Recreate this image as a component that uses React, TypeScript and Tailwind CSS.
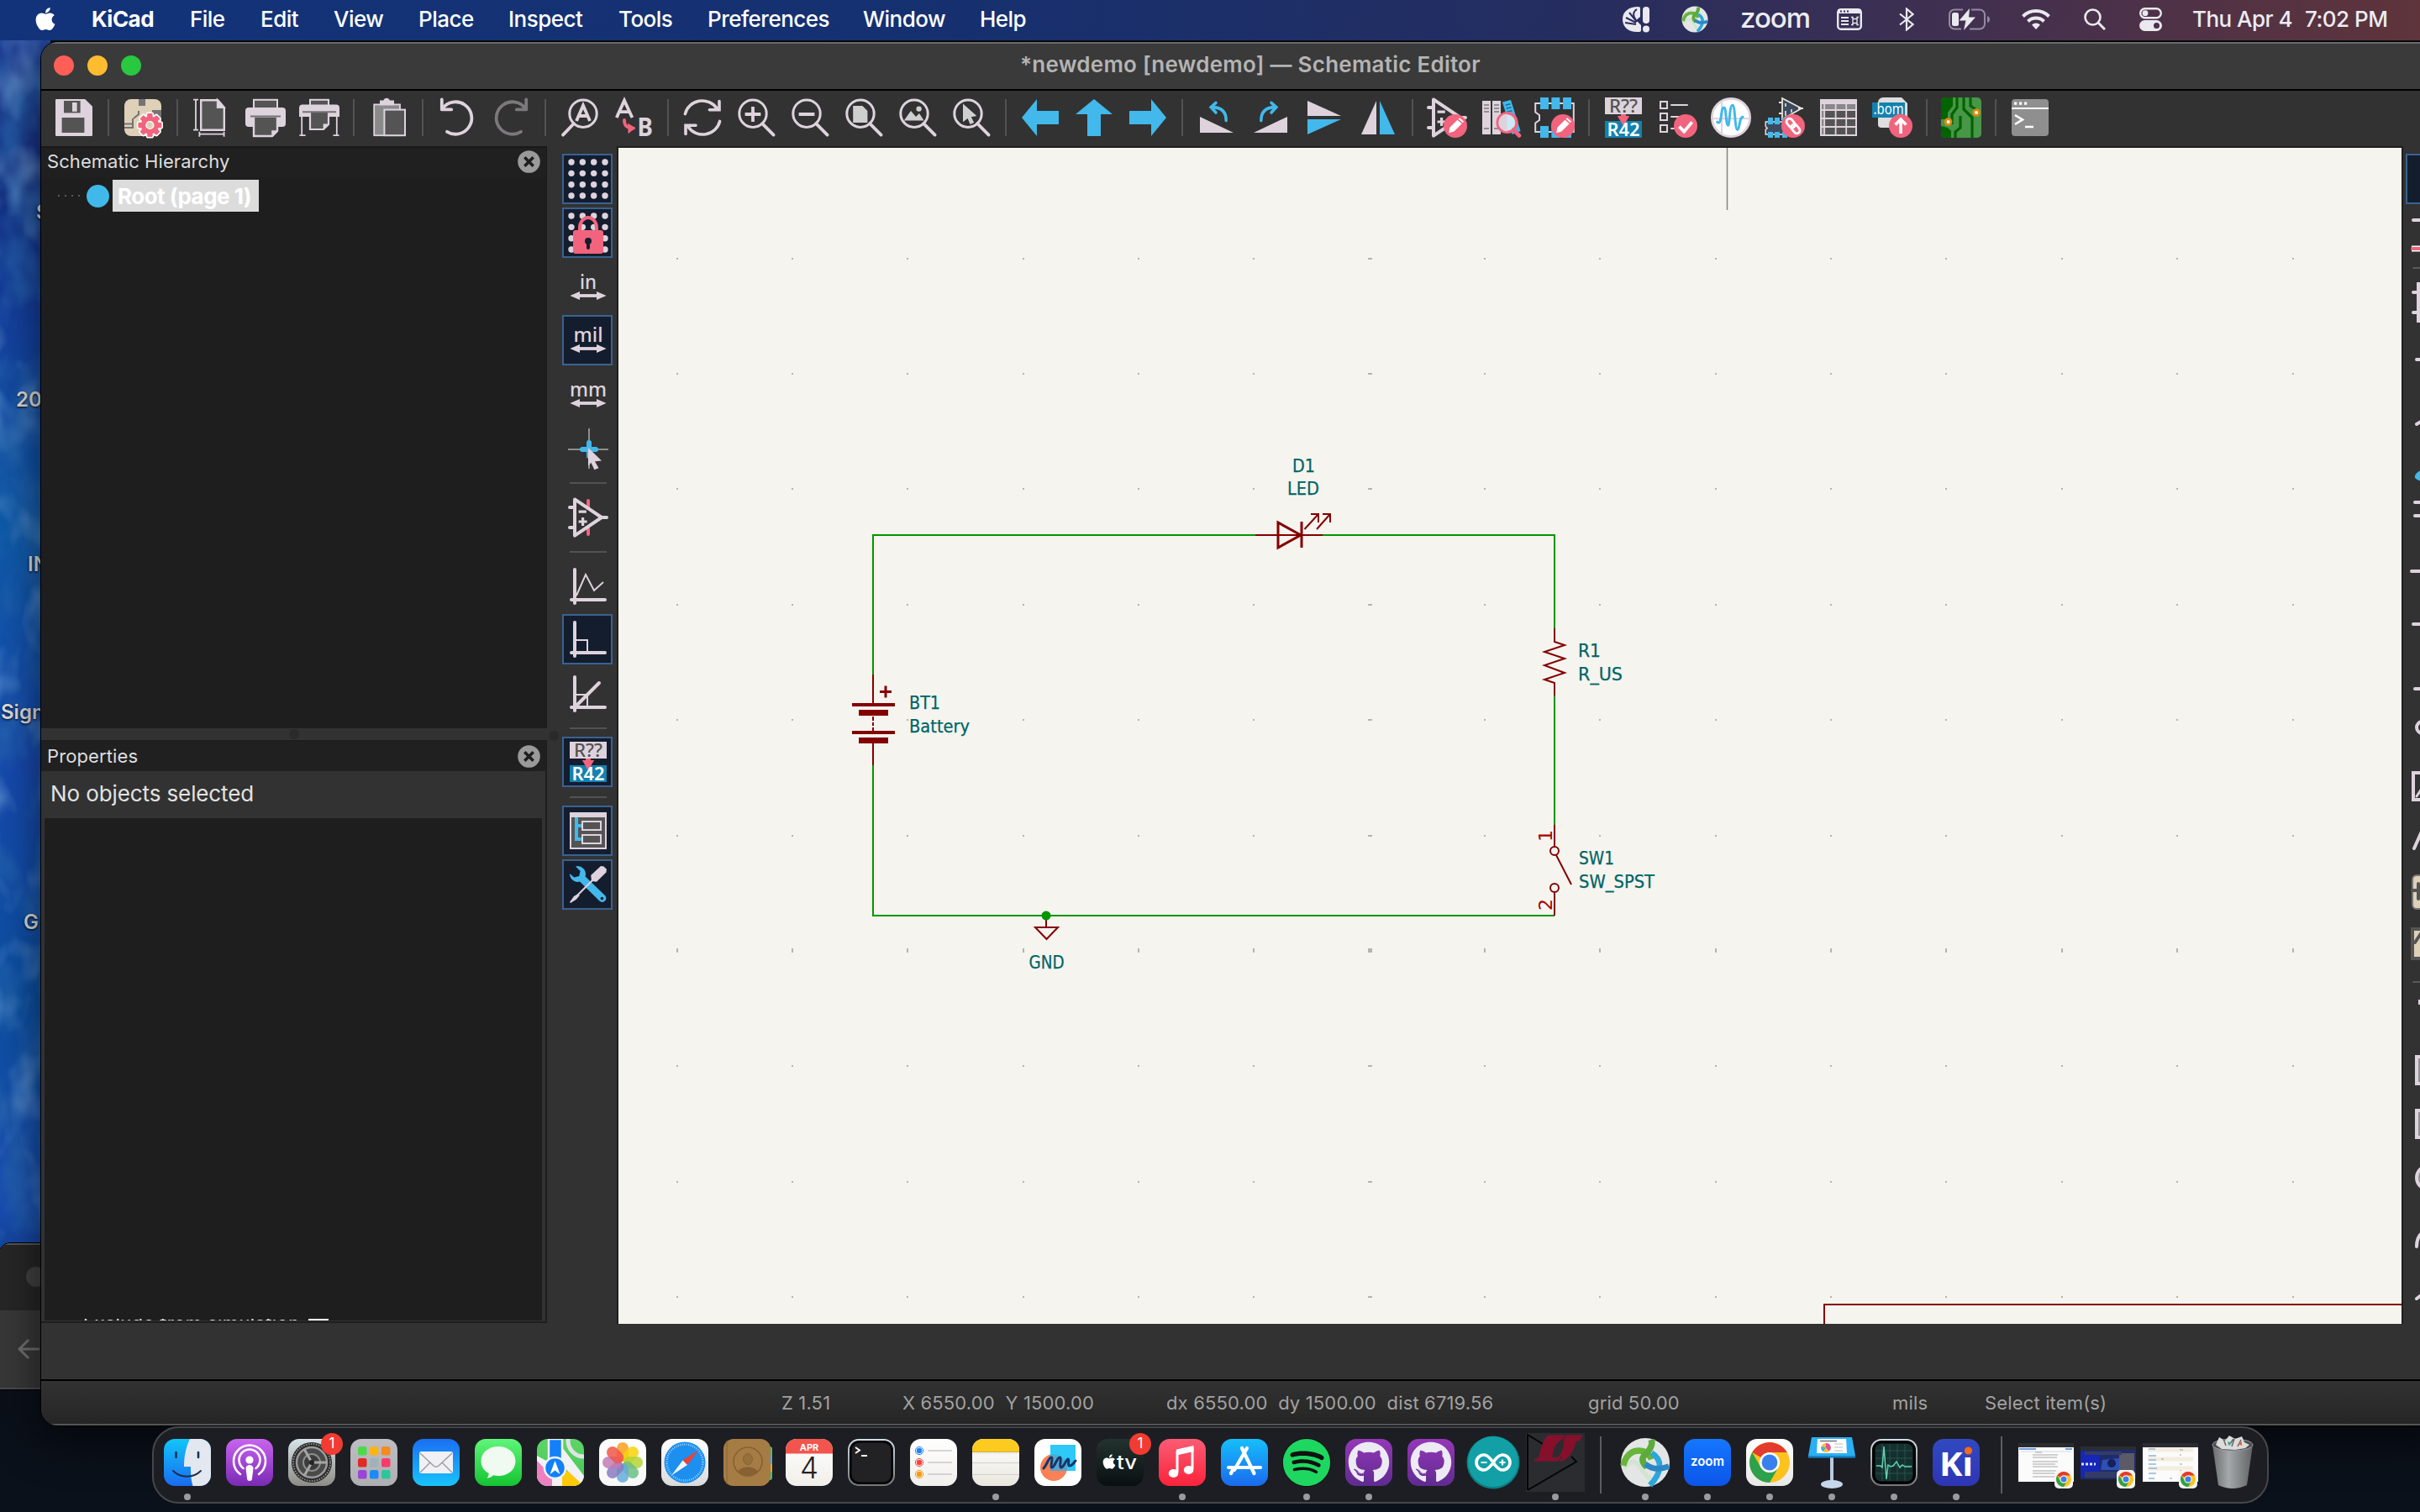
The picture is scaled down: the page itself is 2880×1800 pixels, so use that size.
import React from "react";
import { FaApple, FaGithub, FaSpotify } from "react-icons/fa";

const L = "#DED3DD";
const B = "#42B8EB";
const P = "#F2647E";
const D = "#545454";

type Kids = { children?: React.ReactNode };

function Ico({ children }: Kids) {
  return (
    <svg viewBox="0 0 24 24" className="block h-12 w-12 shrink-0 overflow-visible" fill="none">
      {children}
    </svg>
  );
}

function Pencil({ x = 17, y = 17 }: { x?: number; y?: number }) {
  return (
    <g transform={`translate(${x} ${y})`}>
      <circle r="7" fill={P} />
      <path d="M-3.9 4.1l.6-3.2L1.2-3.6 3.8-1.4-.8 3.3z" fill="#fff" />
      <path d="M1.8-4.2l.7-.7 2.5 2.2-.7.8z" fill="#fff" />
    </g>
  );
}

function Lens({ children }: Kids) {
  return (
    <Ico>
      <circle cx="10" cy="9.6" r="8.1" stroke={L} strokeWidth="1.5" />
      <path d="M15.6 15.6L22.3 22.3" stroke={L} strokeWidth="1.9" strokeLinecap="round" />
      {children}
    </Ico>
  );
}

function OpAmp() {
  return (
    <>
      <path d="M4 1.2L20 12 4 22.8z" stroke={L} strokeWidth="2" strokeLinejoin="round" />
      <path d="M1 6h3M1 18h3M20 12h3" stroke={L} strokeWidth="2" strokeLinecap="round" />
      <path d="M6.3 8.6h4.6M6.3 14.5h5M8.8 12v5" stroke={L} strokeWidth="1.6" />
    </>
  );
}

function Annotate() {
  return (
    <Ico>
      <rect x="1" y="0" width="22" height="10" fill={L} />
      <rect x="1" y="14" width="22" height="10" fill="#1282B0" />
      <text x="12" y="9" textAnchor="middle" fontSize="11" textLength="17" lengthAdjust="spacingAndGlyphs" fill={D} fontFamily="Noto Sans" fontWeight="500">R??</text>
      <path d="M10.5 10h3v1H15.6L12 17 8.4 11h2.1z" fill={P} />
      <text x="12" y="23" textAnchor="middle" fontSize="11" textLength="19.6" lengthAdjust="spacingAndGlyphs" fill="#fff" fontFamily="Noto Sans" fontWeight="600">R42</text>
    </Ico>
  );
}

const topBar: (React.ReactNode | null)[] = [
  <Ico>
    <path d="M1.6 1H18.6L23 5.4V22.4a.6.6 0 0 1-.6.6H1.6a.6.6 0 0 1-.6-.6V1.6A.6.6 0 0 1 1.6 1z" fill={L} />
    <rect x="6" y="2" width="9.8" height="7.2" fill={D} />
    <rect x="11" y="3" width="2.8" height="5.4" fill={L} />
    <rect x="4.8" y="12" width="13.4" height="9" fill={D} />
  </Ico>,
  null,
  <Ico>
    <rect x="1" y="1" width="22" height="22" rx="4" fill="#DED1B8" />
    <path d="M9.500 1h4v4h-4zM17.500 7.500h5.500v5h-5.500z" fill="#747474" />
    <path d="M1 15.800h5M6 12.500v5.500H1M6.500 12.500l3-2.500V8" stroke="#747474" strokeWidth="1" />
    <g transform="translate(16.2 16.5)">
      {[0, 45, 90, 135].map((a) => (
        <rect key={a} x="-2" y="-7.4" width="4" height="14.8" rx="1" fill={P} stroke="#fff" strokeWidth="0.8" transform={`rotate(${a})`} />
      ))}
      <circle r="5.3" fill={P} />
      <circle r="2.2" fill="#DED1B8" stroke="#fff" strokeWidth="0.7" />
    </g>
  </Ico>,
  null,
  <Ico>
    <path d="M1 1.3h3M2.5 1v18.5M1 19.3h3M4.7 21.8h14.6M4.7 20.4v3M19.3 20.4v3" stroke={L} strokeWidth="0.9" />
    <path d="M5.6 1.6H15.6L19.4 6V19.4H5.6z" fill={D} stroke={L} strokeWidth="1.2" />
    <path d="M15.4 1.4V6h4z" fill={L} stroke={L} />
  </Ico>,
  <Ico>
    <rect x="5" y="1.4" width="14" height="6" fill={D} stroke={L} strokeWidth="1" />
    <path d="M2 6h20a2 2 0 0 1 2 2v7.5a2 2 0 0 1-2 2H2a2 2 0 0 1-2-2V8a2 2 0 0 1 2-2z" fill={L} />
    <path d="M5 11.3h14v8.7l-3 3H5z" fill={D} stroke={L} strokeWidth="1.2" />
    <path d="M19 19.6h-3.4V23z" fill={L} />
    <path d="M3 11.3h18" stroke="#747474" strokeWidth="1" />
  </Ico>,
  <Ico>
    <rect x="6.5" y="1.4" width="11" height="4" fill={D} stroke={L} strokeWidth="1" />
    <path d="M2 4.2h20a2 2 0 0 1 2 2v5.3H0V6.200a2 2 0 0 1 2-2z" fill={L} />
    <path d="M1.6 11v12M22.400 11v12M.2 22.600h3.600M20.200 22.600h3.600" stroke={L} strokeWidth="0.9" />
    <path d="M6.500 8.500h11v7.500l-3 3h-8z" fill={D} stroke={L} strokeWidth="1.1" />
    <path d="M17.500 15.800h-3.200V19z" fill={L} />
    <path d="M2 8.600h20" stroke="#747474" strokeWidth="1" />
  </Ico>,
  null,
  <Ico>
    <rect x="3.600" y="4.200" width="15.400" height="18.400" fill="#8a8a8a" stroke={L} strokeWidth="0.9" />
    <path d="M7 1.800h2.200a2 2 0 0 1 3.800 0H15.500V4.600H7z" fill={L} />
    <rect x="9.700" y="7.300" width="12.300" height="15.300" fill={D} stroke={L} strokeWidth="1" />
  </Ico>,
  null,
  <Ico>
    <path d="M2.900 1.200V7.200H8.600M3.300 6.600A9.600 9.600 0 1 1 6 20.400" stroke={L} strokeWidth="1.900" strokeLinecap="round" strokeLinejoin="round" />
  </Ico>,
  <Ico>
    <path d="M21.100 1.200V7.200H15.400M20.700 6.600A9.600 9.600 0 1 0 18 20.400" stroke="#7c787c" strokeWidth="1.900" strokeLinecap="round" strokeLinejoin="round" />
  </Ico>,
  null,
  <Ico>
    <circle cx="14" cy="9.600" r="8.100" stroke={L} strokeWidth="1.500" />
    <path d="M8.400 15.600L2 22.300" stroke={L} strokeWidth="1.900" strokeLinecap="round" />
    <path d="M10 14L14 4.800 18 14M11.500 11h5" stroke={L} strokeWidth="1.900" />
  </Ico>,
  <Ico>
    <path d="M1.900 12L6.500 1.800 11.200 12M3.600 8.600h6" stroke={L} strokeWidth="1.900" />
    <text x="14.200" y="22.800" fontSize="15" fill={L} fontFamily="Noto Sans" fontWeight="700" textLength="9.200" lengthAdjust="spacingAndGlyphs">B</text>
    <path d="M6.500 13.500c0 3.500 1.500 4.600 5.500 4.800" stroke={P} strokeWidth="1.900" strokeLinecap="round" />
    <path d="M8.600 15.200L13 18.200 8.800 21.600z" fill={P} />
  </Ico>,
  null,
  <Ico>
    <path d="M1.700 9.800A10.400 10 0 0 1 20.600 6.600M22.300 14.200A10.400 10 0 0 1 3.400 17.400" stroke={L} strokeWidth="1.800" strokeLinecap="round" />
    <path d="M22 2.300V7.400H16.200M2 21.700V16.600H8" stroke={L} strokeWidth="1.800" strokeLinecap="round" />
  </Ico>,
  <Lens><path d="M5.300 10h9.400M10 5.500v9" stroke={L} strokeWidth="1.900" /></Lens>,
  <Lens><path d="M5.300 10h9.400" stroke={L} strokeWidth="1.900" /></Lens>,
  <Lens><path d="M5.600 5h5.600l3 3v7.000H5.600z" fill="#CFCFCF" /></Lens>,
  <Lens><path d="M3.900 13.800L8 8l3 3.500 2-2 2.800 4.300zM12.800 5.200a1.600 1.600 0 1 1 0 3.200 1.600 1.600 0 0 1 0-3.200z" fill="#CFCFCF" /></Lens>,
  <Lens><path d="M7 3.800L15.200 11l-3.300.6 1.700 3.400-2.300 1-1.500-3.500L7 14.600z" fill="#CFCFCF" /></Lens>,
  null,
  <Ico><path d="M1 12L10 1V8H23v8H10v7z" fill={B} /></Ico>,
  <Ico><path d="M12 1L23 10H16V23H8V10H1z" fill={B} /></Ico>,
  <Ico><path d="M23 12L14 1V8H1v8H14v7z" fill={B} /></Ico>,
  null,
  <Ico>
    <path d="M2 11.500V21H22z" fill={L} />
    <path d="M17.600 13.800c0-5-2.500-8.000-8.600-8.000M11.500 3.200L8.600 5.800 11.500 9" stroke={B} strokeWidth="1.800" strokeLinecap="round" />
  </Ico>,
  <Ico>
    <path d="M22 11.500V21H2z" fill={L} />
    <path d="M6.400 13.800c0-5 2.500-8.000 8.600-8.000M12.500 3.200L15.400 5.800 12.500 9" stroke={B} strokeWidth="1.800" strokeLinecap="round" />
  </Ico>,
  <Ico><path d="M2 2V11H22z" fill={L} /><path d="M2 13V22L22 13z" fill={B} /></Ico>,
  <Ico><path d="M11 2V22H2z" fill={L} /><path d="M13 2V22H22z" fill={B} /></Ico>,
  null,
  <Ico><OpAmp /><Pencil /></Ico>,
  <Ico>
    <rect x="1" y="2" width="5" height="20" fill={L} /><rect x="7" y="2" width="5" height="20" fill={L} />
    <path d="M2 4.500h3M2 6.500h3M2 8.500h3M2 18.500h3M8 4.500h3M8 6.500h3M8 8.500h3M8 18.500h3" stroke="#777" strokeWidth=".8" />
    <path d="M13 2.700l5-1.200L23.800 20l-5 2z" fill={B} />
    <path d="M14.800 4.600l3-.7M15.300 6.600l3-.7M15.800 8.600l3-.7" stroke="#1a6f96" strokeWidth=".8" />
    <circle cx="15.800" cy="15" r="5.700" fill="#CDE9F5" stroke={P} strokeWidth="1.700" />
    <path d="M15.800 9.800a5.200 5.200 0 0 0 0 10.400z" fill="#DED3DD" />
    <path d="M19.600 19.200L23 22.700" stroke={P} strokeWidth="2.400" strokeLinecap="round" />
  </Ico>,
  <Ico>
    <path d="M.6 3.500H23.400V20.500H.6V15.200L3 13.500V10.500L.6 8.800z" stroke={L} strokeWidth="1" />
    <path d="M3.500 0h5v7h-5zM10.200 0h5v7h-5zM17 0h5v7h-5zM3.500 17h5v7h-5zM10.200 17h5v7h-5zM17 17h5v7h-5z" fill={B} />
    <Pencil />
  </Ico>,
  null,
  <Annotate />,
  <Ico>
    {[2.500, 9.500, 16.500].map((y) => (
      <g key={y}>
        <rect x="2" y={y} width="4" height="4" stroke={L} strokeWidth="1" />
        <path d={`M8.500 ${y + 2}h9.500`} stroke={L} strokeWidth="1" strokeLinecap="round" />
      </g>
    ))}
    <circle cx="17" cy="17" r="7" fill={P} />
    <path d="M13.200 17.300l2.900 3 4.700-5.600" stroke="#fff" strokeWidth="1.900" />
  </Ico>,
  <Ico>
    <circle cx="12" cy="12" r="11.300" fill="#fff" stroke={L} strokeWidth="1.400" />
    <path d="M6.500 2.500v19M1 12.600h22" stroke={L} strokeWidth="1" />
    <path d="M3.800 14.600c2 2 2.300-3 2.700-6 .6-3.500 2-3.500 2.300 0 .4 4 .6 8 1.500 8 .9 0 .8-12 2.600-12 1.700 0 1.300 14.600 3 14.600 1.300 0 1-7.600 3.200-7.600" stroke={B} strokeWidth="1.500" strokeLinecap="round" />
  </Ico>,
  <Ico>
    <path d="M10.500.5L22 6.500 10.500 13z" fill="#3c4a60" stroke="#E8E4DC" strokeWidth=".9" />
    <path d="M8.500 3h2M8.500 9.500h2M20 6.500h3" stroke="#E8E4DC" strokeWidth=".9" />
    <path d="M12.500 3.500v2M12.500 8v3M16 7v2" stroke="#E8E4DC" strokeWidth=".8" />
    <path d="M.6 14.500H15V22H.6v-2.800l1-1-1-1z" fill="#3c4a60" stroke="#E8E4DC" strokeWidth=".7" />
    <path d="M2 12h3v4H2zM6 12h3v4H6zM10.500 12h3v4h-3zM2 20.500h3V24H2zM6 20.500h3V24H6zM10.500 20.500h3V24h-3z" fill={B} />
    <circle cx="17" cy="17" r="7" fill={P} />
    <g stroke="#fff" strokeWidth="1.400" transform="rotate(50 17 17)"><rect x="11.800" y="15.200" width="6" height="3.600" rx="1.800" /><rect x="16.200" y="15.200" width="6" height="3.600" rx="1.800" /></g>
  </Ico>,
  <Ico>
    <rect x="1.500" y="1.500" width="21" height="21" fill="#8a868a" stroke={L} strokeWidth="1" />
    <path d="M4 8h18v14H4z" fill={D} />
    <rect x="1" y="1" width="22" height="3" fill={L} />
    <path d="M3.600 4v19M10.300 4v19M16.600 4v19M1 7.500h22M1 12.500h22M1 17.500h22" stroke={L} strokeWidth=".9" />
  </Ico>,
  <Ico>
    <path d="M6.500 0H17.500L21 3.500V16a2 2 0 0 1-2 2H5.500a2 2 0 0 1-2-2V3a3 3 0 0 1 3-3z" fill="#DEDEDE" />
    <rect x="0" y="3" width="19.500" height="9" fill="#1282B0" />
    <text x="9.800" y="10.200" textAnchor="middle" fontSize="9" textLength="18" lengthAdjust="spacingAndGlyphs" fill="#fff" fontFamily="Noto Sans">.bom</text>
    <circle cx="17" cy="17" r="7" fill={P} />
    <path d="M17 21.500V13.500M13.800 16.200L17 13l3.200 3.200" stroke="#fff" strokeWidth="1.800" />
  </Ico>,
  null,
  <Ico>
    <rect width="24" height="24" rx="2.500" fill="#489648" />
    <path d="M0 2.500A2.500 2.500 0 0 1 2.500 0H7v5L4 9v4H0zM0 17l4 1 2 2v4H2.500A2.500 2.500 0 0 1 0 21.500z" fill="#006400" />
    <path d="M9.500 0v6L6.500 10v6M13.500 0v7l5 5V24M17.500 0v5l3 2M11.500 11v7L8.500 20.500V24" stroke="#006400" strokeWidth="1.600" />
    <circle cx="4.300" cy="14.500" r="1.700" fill="#fff" stroke="#E3890B" strokeWidth="1.400" />
    <circle cx="21" cy="9" r="1.700" fill="#fff" stroke="#E3890B" strokeWidth="1.400" />
  </Ico>,
  null,
  <Ico>
    <rect x="1" y="1" width="22" height="22" rx="2" fill="#8F8F8F" />
    <path d="M1 6.500h22" stroke="#fff" strokeWidth="1" />
    <path d="M2.500 3.600h1.600M5.500 3.600h1.600M8.500 3.600h1.600" stroke="#fff" strokeWidth="1.600" />
    <path d="M3 10.500L7.500 13.200 3 16M9 17.500h5" stroke="#fff" strokeWidth="1.300" />
  </Ico>,
];

function Dots() {
  return (
    <>
      {[0, 1, 2, 3].map((r) =>
        [0, 1, 2, 3].map((c) => (
          <circle key={`${r}${c}`} cx={2 + c * 6.67} cy={2 + r * 6.67} r="1.850" fill={L} />
        ))
      )}
    </>
  );
}

function Unit({ t, w }: { t: string; w: number }) {
  return (
    <Ico>
      <text x="12" y="13" textAnchor="middle" fontSize="12" fontWeight="500" fontFamily="Noto Sans" fill={L} textLength={w} lengthAdjust="spacingAndGlyphs">{t}</text>
      <path d="M5 17h14" stroke={L} strokeWidth="1.900" />
      <path d="M1.200 17L7 14.500v5zM22.800 17L17 14.500v5z" fill={L} />
    </Ico>
  );
}

function Axes({ children }: Kids) {
  return (
    <Ico>
      {children}
      <path d="M4 2v20M2 20h20" stroke={L} strokeWidth="2" strokeLinecap="round" />
    </Ico>
  );
}

const leftBar: ({ on?: boolean; el: React.ReactNode } | null)[] = [
  { on: true, el: <Ico><Dots /></Ico> },
  {
    on: true,
    el: (
      <Ico>
        <Dots />
        <path d="M7 12V9a5 6 0 0 1 10 0v3" stroke={P} strokeWidth="2" />
        <rect x="3" y="10.500" width="18" height="14" rx="1.500" fill={P} />
        <circle cx="12" cy="17" r="2" fill="#141d2e" /><path d="M12 17v4" stroke="#141d2e" strokeWidth="2" strokeLinecap="round" />
      </Ico>
    ),
  },
  { el: <Unit t="in" w={10} /> },
  { on: true, el: <Unit t="mil" w={17.500} /> },
  { el: <Unit t="mm" w={22} /> },
  {
    el: (
      <Ico>
        <path d="M12.500 0v24M0 12.500h24" stroke="#8f8f8f" strokeWidth="1" />
        <path d="M12.500 8.500v8M8.500 12.500h8" stroke={B} strokeWidth="3" strokeLinecap="round" />
        <path d="M12 11.500L20 19.200l-4 .4 2.200 4-2.500 1-2-4.200L12 22.500z" fill={L} />
      </Ico>
    ),
  },
  null,
  { el: <Ico><path d="M12 2v20" stroke={P} strokeWidth="2" strokeLinecap="round" /><path d="M4 1.200L20 12 4 22.800z" fill="#323232" /><OpAmp /></Ico> },
  null,
  { el: <Axes><path d="M5 17.500L10.500 5 15.500 14.500 21 9.500" stroke={L} strokeWidth="1" /></Axes> },
  { on: true, el: <Axes><path d="M4 12.500h7.500V20" stroke={L} strokeWidth="1" /></Axes> },
  { el: <Axes><path d="M4 12.500h7.500V20" stroke={L} strokeWidth="1" /><path d="M5 19L18.500 5.500" stroke={L} strokeWidth="2" strokeLinecap="round" /></Axes> },
  null,
  { on: true, el: <Annotate /> },
  null,
  {
    on: true,
    el: (
      <Ico>
        <rect x="1.500" y="1.500" width="21" height="21" fill={D} stroke={L} strokeWidth="1" />
        <rect x="1" y="1" width="22" height="3" fill={L} />
        <path d="M5 4v13.000h3M5 9h3" stroke={B} strokeWidth="2" />
        <rect x="8.500" y="6.500" width="11" height="5" stroke={L} strokeWidth="1" /><rect x="8.500" y="14.500" width="11" height="5" stroke={L} strokeWidth="1" />
      </Ico>
    ),
  },
  {
    on: true,
    el: (
      <Ico>
        <path d="M4.500 1.200a4.800 4.800 0 0 1 5.800 6.000L22 18.500a2.300 2.300 0 0 1-3.300 3.300L7.000 10.300A4.800 4.800 0 0 1 1 5.500L3.600 7.800 6.600 7 7.300 4z" fill={B} />
        <circle cx="20.200" cy="20.300" r=".9" fill="#141d2e" />
        <path d="M15 9L5.500 18.500" stroke={L} strokeWidth="1.100" />
        <path d="M6 17.500l.9 1-2 2.400L1.500 23 1 22.500 3.500 19z" fill={L} />
        <path d="M13.600 6.500L19.500 1l1.800.2L23 3.000l-.3 1.700L17 10.400 14 10z" fill={L} />
      </Ico>
    ),
  },
];

function RightBar() {
  return (
    <div className="flex w-[22px] shrink-0 flex-col overflow-hidden pl-[3px] pt-[9px]">
      <div className="h-[60px] w-[60px] shrink-0 border-2 border-[#3a6290] bg-[#141d2e]" />
      <svg className="block shrink-0" width="18" height="1320" viewBox="2863 243 18 1320" fill="none" stroke={L} strokeWidth="4" strokeLinecap="round">
        <path d="M2872 262h20" />
        <path d="M2870 296h20" stroke="#fff" strokeWidth="7" strokeLinecap="butt" /><path d="M2871 296h20" stroke={P} />
        <path d="M2872 319h20M2872 1169h20" stroke="#5a5a5a" strokeWidth="2" />
        <path d="M2872 348h6M2872 372h6" /><rect x="2876" y="336" width="10" height="48" fill={L} stroke="none" />
        <path d="M2876 428h10M2876 505l8-5" />
        <path d="M2874 566q4-6 10-7v14q-6 0-10-4z" fill={B} stroke="none" />
        <path d="M2874 598h10M2874 614h10M2870 680h20M2872 743h10M2874 820h10" />
        <circle cx="2883" cy="866" r="7" /><rect x="2872" y="920" width="30" height="32" /><path d="M2876 948l8-12" strokeWidth="3" />
        <path d="M2873 1010l9-20" />
        <rect x="2871" y="1042" width="30" height="40" rx="5" fill="#DED1B8" stroke="#747474" strokeWidth="2" /><path d="M2871 1060h12M2878 1052v18" stroke="#545454" />
        <rect x="2871" y="1106" width="30" height="35" fill="#DED1B8" stroke="#545454" /><path d="M2874 1122l8-12" stroke="#545454" />
        <path d="M2878 1193h8" strokeLinecap="butt" strokeWidth="6" />
        <rect x="2876" y="1258" width="30" height="32" fill="#8f8f8f" /><rect x="2876" y="1322" width="30" height="32" fill="#8f8f8f" />
        <circle cx="2890" cy="1402" r="14" fill="#8f8f8f" /><path d="M2876 1484q0-14 10-18M2876 1546l8-6" />
      </svg>
    </div>
  );
}

function Sch({ x, y, w, t }: { x: number; y: number; w: number; t: string }) {
  return (
    <text x={x} y={y} textLength={w} lengthAdjust="spacingAndGlyphs" fontSize="20.500" fill="#006464" stroke="#006464" strokeWidth="0.25" fontFamily="DejaVu Sans">{t}</text>
  );
}

function Canvas() {
  const xs = Array.from({ length: 15 }, (_, i) => Math.round(805.5 + i * 137.36));
  const ys = Array.from({ length: 10 }, (_, i) => Math.round(307.5 + i * 137.4));
  return (
    <svg className="block h-[1400px] w-[2122px] shrink-0 bg-[#F5F4EF]" viewBox="736 176 2122 1400" fill="none">
      {ys.map((y, j) =>
        xs.map((x, i) => (
          <rect key={`${x}-${y}`} x={x - (i === 6 ? 2 : 1)} y={y - (j === 6 ? 3 : 1)} width={i === 6 ? 5 : 2} height={j === 6 ? 5 : 2} fill="#B4B4B1" />
        ))
      )}
      <path d="M2055.500 176v74" stroke="#848484" strokeWidth="1.500" />
      <path d="M2171 1576V1553H2858" stroke="#840000" strokeWidth="2" />
      <g stroke="#009600" strokeWidth="2">
        <path d="M1039 803V637H1494M1574 637H1850V748M1850 828V982M1850 1090H1039V911" />
      </g>
      <g stroke="#840000" strokeWidth="2">
        <path d="M1494 637h80" />
        <path d="M1521 622V652L1548 637z" strokeWidth="3" />
        <path d="M1549 621v31" strokeWidth="3" />
        <path d="M1552.500 630L1569 612M1567 630L1583 612M1560 612h9v10M1574 612h9v10" />
        <path d="M1850 748v16l12 4-24 8 24 8-24 8 24 9-24 8 12 4v15" />
        <path d="M1039 803v36" />
        <path d="M1039 885v26M1039 853v5M1039 860v4M1039 866v4" />
        <path d="M1047 823.500h14M1054 816.500v14" strokeWidth="3" />
        <path d="M1245 1090v14M1232 1104h27l-13.500 14z" />
        <path d="M1850 982v26M1850 1062v28M1852 1018l18 35" />
        <circle cx="1850" cy="1013" r="5" /><circle cx="1850" cy="1057" r="5" />
      </g>
      <path d="M1014 837h51v4h-51zM1022 845h35v7h-35zM1014 870h51v4h-51zM1022 878h35v7h-35z" fill="#840000" />
      <circle cx="1245" cy="1090" r="5.500" fill="#009600" />
      <Sch x={1538} y={562} w={27} t="D1" />
      <Sch x={1532} y={589} w={38} t="LED" />
      <Sch x={1878} y={782} w={27} t="R1" />
      <Sch x={1878} y={809.500} w={53} t="R_US" />
      <Sch x={1082} y={844} w={37} t="BT1" />
      <Sch x={1082} y={872} w={72} t="Battery" />
      <Sch x={1879} y={1029} w={42} t="SW1" />
      <Sch x={1879} y={1057} w={90} t="SW_SPST" />
      <Sch x={1224.500} y={1152.500} w={42} t="GND" />
      <text transform="translate(1847 1002) rotate(-90)" fontSize="22" fill="#A90000" fontFamily="DejaVu Sans">1</text>
      <text transform="translate(1847 1084) rotate(-90)" fontSize="22" fill="#A90000" fontFamily="DejaVu Sans">2</text>
    </svg>
  );
}

function CloseDot() {
  return (
    <svg width="27" height="27" viewBox="0 0 26 26" className="block">
      <circle cx="13" cy="13" r="12.800" fill="#9A9A9A" />
      <path d="M8 8l10 10M18 8L8 18" stroke="#1e1e1e" strokeWidth="3.400" />
    </svg>
  );
}

function SidePanels() {
  return (
    <div className="relative flex h-[1402px] w-[602px] shrink-0 flex-col">
      <div className="flex h-[693px] flex-col border-r border-t-2 border-[#1a1a1a] bg-[#1E1E1E]">
        <div className="flex h-[35px] items-center justify-between bg-[#202020] pb-[2px] pl-[7px] pr-[7px]">
          <span className="text-[22px] tracking-[0.003em] text-[#DEDEDE]">Schematic Hierarchy</span>
          <CloseDot />
        </div>
        <div className="mt-[3px] flex h-[38px] items-center pl-[20px]">
          <div className="h-[2px] w-[32px] bg-[repeating-linear-gradient(90deg,#5a5a5a_0,#5a5a5a_2px,transparent_2px,transparent_8px)]" />
          <div className="ml-[2px] h-[27px] w-[27px] rounded-full bg-[#40B8EA]" />
          <div className="ml-[4px] flex h-[38px] w-[174px] items-center bg-[#DCDCDC] pl-[6px]">
            <span className="whitespace-nowrap text-[26px] font-bold tracking-[-0.02em] text-white">Root (page 1)</span>
          </div>
        </div>
      </div>
      <div className="flex h-[14px] items-center justify-center bg-[#323232]"><div className="h-3 w-3 rounded-full bg-[#2a2a2a]" /></div>
      <div className="flex h-[694px] flex-col border-b-2 border-r-2 border-t-2 border-[#1e1e1e] bg-[#323232]">
        <div className="flex h-[35px] items-center justify-between bg-[#202020] pl-[7px] pr-[6px]">
          <span className="text-[22px] tracking-[0.005em] text-[#DEDEDE]">Properties</span>
          <CloseDot />
        </div>
        <div className="flex h-[56px] items-center pl-[11px] pb-[3px]">
          <span className="text-[26px] tracking-[-0.004em] text-[#E2E2E2]">No objects selected</span>
        </div>
        <div className="ml-[4px] flex h-[598px] w-[592px] flex-col justify-end bg-[#1E1E1E]">
          <div className="flex h-[2px] overflow-hidden pl-[46px]">
            <span className="-mt-[8px] text-[22px] leading-[26px] tracking-[0.018em] text-[#E2E2E2]">Exclude from simulation</span>
            <span className="ml-[10px] h-[2px] w-[24px] bg-white" />
          </div>
        </div>
      </div>
    </div>
  );
}

function KiCadWindow() {
  return (
    <div className="absolute left-[49px] top-[50px] flex h-[1647px] w-[2860px] flex-col overflow-hidden rounded-[20px] bg-[#323232] shadow-[0_0_0_1px_#000,0_18px_50px_rgba(0,0,0,.6)]">
      <div className="flex h-[58px] shrink-0 items-center border-b-2 border-black bg-[#3A3A3A] pl-[15px] shadow-[inset_0_2px_0_#6b6b6b]">
        <div className="flex gap-4">
          <div className="h-6 w-6 rounded-full bg-[#FF5F57]" />
          <div className="h-6 w-6 rounded-full bg-[#FEBC2E]" />
          <div className="h-6 w-6 rounded-full bg-[#28C840]" />
        </div>
        <div className="ml-[1046px] whitespace-nowrap pb-1 text-[26px] font-semibold tracking-[0.0095em] text-[#B4B4B4]">*newdemo [newdemo] — Schematic Editor</div>
      </div>
      <div className="flex h-[66px] shrink-0 items-center gap-4 pb-[2px] pl-[15px]">
        {topBar.map((el, i) => (el === null ? <div key={i} className="h-11 w-[2px] shrink-0 bg-[#525252]" /> : <React.Fragment key={i}>{el}</React.Fragment>))}
      </div>
      <div className="flex h-[1402px] shrink-0">
        <SidePanels />
        <div className="relative flex w-[82px] shrink-0 flex-col items-start gap-1 pl-[18px] pt-[9px]">
          <div className="absolute left-[2px] top-[696px] h-3 w-3 rounded-full bg-[#2a2a2a]" />
          {leftBar.map((b, i) =>
            b === null ? (
              <div key={i} className="mb-[5px] ml-[9px] mt-[7px] h-[2px] w-11 shrink-0 bg-[#525252]" />
            ) : (
              <div key={i} className={b.on ? "flex h-[60px] w-[60px] shrink-0 items-center justify-center border-2 border-[#3a6290] bg-[#141d2e] pl-[2px]" : "flex h-[60px] w-[60px] shrink-0 items-center justify-center pl-[2px] pt-[1px]"}>
                {b.el}
              </div>
            )
          )}
        </div>
        <div className="ml-[1px] border-l-2 border-r-2 border-t-2 border-[#1e1e1e]"><Canvas /></div>
        <RightBar />
      </div>
      <div className="h-[68px] shrink-0 border-b-2 border-black" />
      <div className="flex flex-1 items-center whitespace-pre bg-gradient-to-b from-[#323232] to-[#252525] text-[22px] tracking-[0.007em] text-[#A2A2A2] shadow-[inset_0_-2px_0_#555]">
        <span className="ml-[881px] w-[144px] shrink-0">Z 1.51</span>
        <span className="w-[314px] shrink-0">X 6550.00  Y 1500.00</span>
        <span className="w-[502px] shrink-0">dx 6550.00  dy 1500.00  dist 6719.56</span>
        <span className="w-[362px] shrink-0">grid 50.00</span>
        <span className="w-[110px] shrink-0">mils</span>
        <span>Select item(s)</span>
      </div>
    </div>
  );
}

function MenuBar() {
  return (
    <div className="absolute inset-x-0 top-0 flex h-12 items-center whitespace-pre bg-[linear-gradient(90deg,#12337a_0%,#16306f_40%,#252d5f_65%,#42304f_82%,#5f343b_100%)] pb-[3px] text-[26px] font-medium tracking-[-0.02em] text-white">
      <FaApple className="ml-[40px] h-[31px] w-[28px] shrink-0" />
      <span className="ml-[41px] w-[117px] shrink-0 font-bold">KiCad</span>
      <span className="w-[84px] shrink-0">File</span>
      <span className="w-[87px] shrink-0">Edit</span>
      <span className="w-[101px] shrink-0">View</span>
      <span className="w-[107px] shrink-0">Place</span>
      <span className="w-[131px] shrink-0">Inspect</span>
      <span className="w-[106px] shrink-0">Tools</span>
      <span className="w-[185px] shrink-0">Preferences</span>
      <span className="w-[139px] shrink-0">Window</span>
      <span className="w-[765px] shrink-0">Help</span>
      <svg className="shrink-0" width="32" height="32" viewBox="0 0 32 32">
        <path d="M19 1q2 0 2 2v10L16 17 22 23v6q0 2-3 2H17C7 31 0 25 0 16S7 1 19 1z" fill="#e9e9ef" />
        <path d="M17 4c-5 3-5 8-1 13M4 14l12 6M3 20l13 2M8 8l9 11" stroke="#2a2d60" strokeWidth="2" fill="none" />
        <rect x="24" y="1" width="8" height="20" rx="4" fill="#e9e9ef" /><circle cx="28" cy="27.500" r="4" fill="#e9e9ef" />
      </svg>
      <svg className="ml-[38px] shrink-0" width="32" height="32" viewBox="0 0 32 32"><WebexArt /></svg>
      <span className="ml-[38px] w-[115px] shrink-0 pb-1 text-[33px] font-medium leading-[40px] tracking-[-0.03em] text-[#ececf2]">zoom</span>
      <svg className="shrink-0" width="30" height="26" viewBox="0 0 30 26" fill="none" stroke="#e9e9ef" strokeWidth="2.400">
        <rect x="1.200" y="1.200" width="27.600" height="23.600" rx="3.500" /><path d="M1 3.500h28" strokeWidth="5" /><path d="M4 3.500h2M8 3.500h2M12 3.500h2" stroke="#352e57" strokeWidth="1.800" />
        <path d="M5 11h9M5 15h9M5 19h9" strokeWidth="2" /><path d="M19 12.500h5v5h-5z" strokeWidth="1.300" /><path d="M17 10.500h2v2M26 10.500h-2v2M17 19.500h2v-2M26 19.500h-2v-2" strokeWidth="1.300" />
      </svg>
      <svg className="ml-[44px] shrink-0" width="18" height="28" viewBox="0 0 18 28" fill="none" stroke="#e9e9ef" strokeWidth="2.200"><path d="M1 7.500L16.500 20 9 26.500v-25L16.500 8 1 20.500" /></svg>
      <svg className="ml-[40px] shrink-0" width="50" height="26" viewBox="0 0 50 26" fill="none">
        <path d="M18 1.500H8a6 6 0 0 0-6 6v11a6 6 0 0 0 6 6h8M28 1.500h10a6 6 0 0 1 6 6v11a6 6 0 0 1-6 6H26" stroke="#958aa2" strokeWidth="2" />
        <path d="M47 9v8q3-1 3-4t-3-4z" fill="#958aa2" /><rect x="5" y="5" width="8" height="16" rx="2.500" fill="#e9e9ef" />
        <path d="M26 0L13.500 14.500h8L19 26 33 10.500h-8z" fill="#e9e9ef" />
      </svg>
      <svg className="ml-[38px] shrink-0" width="34" height="26" viewBox="0 0 34 26" fill="none" stroke="#e9e9ef" strokeWidth="4"><path d="M1.500 9.500a22 22 0 0 1 31 0M7.500 15.500a13.500 13.500 0 0 1 19 0" /><path d="M17 25l-5-5.500a7.500 7.500 0 0 1 10 0z" fill="#e9e9ef" stroke="none" /></svg>
      <svg className="ml-[40px] shrink-0" width="26" height="26" viewBox="0 0 26 26" fill="none" stroke="#e9e9ef" strokeWidth="2.600"><circle cx="10.500" cy="10.500" r="9" /><path d="M17 17l8 8" strokeWidth="3" /></svg>
      <svg className="ml-[40px] shrink-0" width="27" height="28" viewBox="0 0 27 28" fill="none"><rect x="1.200" y="1.200" width="24.600" height="11" rx="5.500" stroke="#e9e9ef" strokeWidth="2.400" /><circle cx="7" cy="6.700" r="3.400" fill="#e9e9ef" /><rect y="15" width="27" height="13" rx="6.500" fill="#e9e9ef" /><circle cx="20.500" cy="21.500" r="3.500" fill="#4b304b" /></svg>
      <span className="ml-[36px] w-[134px] shrink-0 text-[#ececf2]">Thu Apr 4</span>
      <span className="text-[#ececf2]">7:02 PM</span>
    </div>
  );
}

function WebexArt() {
  return (
    <>
      <circle cx="16" cy="16" r="15.500" fill="#E4E6E6" />
      <path d="M2 20q7-8 11-1t9 9" fill="none" stroke="#D2E4D2" strokeWidth="3" />
      <path d="M2 18C4 10 9 7.500 15 9q4 2 5 5" fill="none" stroke="#67B53A" strokeWidth="4" />
      <path d="M20 1.500C21 6 18 9 15 12q-2 3 2 7" fill="none" stroke="#5DAA3C" strokeWidth="4" />
      <path d="M20 10c7 4 7 12-1 20.500" fill="none" stroke="#2CA6DC" strokeWidth="3.600" />
      <path d="M16 17q6 5 15 1.500" fill="none" stroke="#2B88C4" strokeWidth="3.600" />
    </>
  );
}

function Tile({ children, from, to, id }: Kids & { from: string; to: string; id: string }) {
  return (
    <svg width="56" height="56" viewBox="0 0 56 56" className="block overflow-visible" fill="none">
      <defs>
        <linearGradient id={id} x1="0" y1="0" x2="0" y2="1"><stop stopColor={from} /><stop offset="1" stopColor={to} /></linearGradient>
        <clipPath id={id + "c"}><rect width="56" height="56" rx="13" /></clipPath>
      </defs>
      <g clipPath={`url(#${id}c)`}><rect width="56" height="56" fill={`url(#${id})`} />{children}</g>
    </svg>
  );
}

function ChromeArt({ s = 25 }: { s?: number }) {
  return (
    <g transform={`translate(28 28) scale(${s / 25})`}>
      <circle r="25" fill="#FCC31E" />
      <path d="M-21.600-12.500A25 25 0 0 1 21.600-12.500H0A12.500 12.500 0 0 0-10.800-6.200z" fill="#E33B2E" />
      <path d="M0 25A25 25 0 0 1-21.600-12.500L-10.800 6.200A12.500 12.500 0 0 0 10.800 6.200z" fill="#2DA14C" />
      <circle r="12.500" fill="#fff" /><circle r="9.800" fill="#3A80EC" />
    </g>
  );
}

function Badge() {
  return <div className="absolute -top-[7px] left-[48px] flex h-[26px] w-[26px] items-center justify-center rounded-full bg-[#F23B32] text-[17px] text-white">1</div>;
}

function Thumb({ kind }: { kind: number }) {
  return (
    <div className="relative h-[46px] w-[66px]">
      {kind === 1 ? (
        <svg width="66" height="46" viewBox="0 0 66 46" className="block">
          <rect y="4" width="66" height="39" fill="#1f2c6c" /><rect y="4" width="66" height="4" fill="#2c2c30" />
          <path d="M0 10h22v30H0z" fill="#1626b8" /><path d="M46 12h18v22H46z" fill="#5b5a66" /><path d="M5 10h44v4H5zM5 34h46v7H5z" fill="#343c66" />
          <path d="M26 20l20-2v14H24z" fill="#2f50b4" /><circle cx="37" cy="24" r="5" fill="#17205a" />
          <path d="M1 25h17" stroke="#d7e2ff" strokeWidth="3" strokeDasharray="3 2" />
        </svg>
      ) : (
        <svg width="66" height="46" viewBox="0 0 66 46" className="block">
          <rect width="66" height="46" fill="#fbfbfb" /><rect width="66" height="5" fill="#2c2c30" />
          {kind === 0 ? (
            <>
              <path d="M1 7h20M56 7h8" stroke="#6ea0e8" strokeWidth="2" /><path d="M3 10h60" stroke="#dfe5ee" strokeWidth="1.500" />
              <path d="M20 11h8M17 14h30M17 17h29M17 22h30M17 25h27M17 28h30M17 33h28M17 36h26M17 40h30" stroke="#a5a5a5" strokeWidth="1" />
            </>
          ) : (
            <>
              <path d="M6 8h54M6 19h54M6 30h54" stroke="#F4EDE0" strokeWidth="5" />
              <path d="M7 7h8M7 15h9M7 20h9M7 25h9M7 30h10M7 36h9M7 42h7" stroke="#8db7dc" strokeWidth="1.500" />
              <path d="M44 8h4M44 14h2M22 19h3M44 25h3M44 33h4M32 42h3" stroke="#999" strokeWidth="1" />
            </>
          )}
        </svg>
      )}
      <svg className="absolute -bottom-[8px] left-[43px]" width="22" height="22" viewBox="0 0 56 56"><rect width="56" height="56" rx="13" fill="#f4f4f4" /><ChromeArt s={23} /></svg>
    </div>
  );
}

const petals = ["#F9A01B", "#F5D30B", "#B5D334", "#6CC083", "#66ACDB", "#8A7CC0", "#C27BB5", "#F1564A"];

type App = { el: React.ReactNode; dot?: boolean; badge?: boolean } | null;

const dock: App[] = [
  { dot: true, el: (
    <Tile id="fi" from="#12C6FA" to="#1A6BF0">
      <path d="M31 0C26 10 24 22 24 33h8c0 8 0 15 2.500 23H56V0z" fill="#E3E8F0" />
      <path d="M14.500 16v6M41 16v6" stroke="#1b3350" strokeWidth="2.600" strokeLinecap="round" />
      <path d="M11 38c9 9 24 9 33 0" stroke="#1b2c48" strokeWidth="1.800" strokeLinecap="round" />
    </Tile>) },
  { el: (
    <Tile id="po" from="#C864F0" to="#7A2AB4">
      <path d="M17 42a19 19 0 1 1 22 0M20.500 35a12.500 12.500 0 1 1 15 0" stroke="#fff" strokeWidth="2.600" strokeLinecap="round" />
      <circle cx="28" cy="25" r="4.600" fill="#fff" /><path d="M23.500 35a4.500 4 0 0 1 9 0l-1.500 12a3 3 0 0 1-6 0z" fill="#fff" />
    </Tile>) },
  { badge: true, el: (
    <Tile id="se" from="#D8E4EA" to="#8E8B86">
      <circle cx="28" cy="28" r="24" fill="#2a2a2a" /><circle cx="28" cy="28" r="22" stroke="#8e8e8e" strokeWidth="2" strokeDasharray="1.500 1.500" />
      <circle cx="28" cy="28" r="18" fill="#4a4a4a" stroke="#9a9a9a" strokeWidth="2.500" /><circle cx="28" cy="28" r="10" fill="#3c3c3c" stroke="#8c8c8c" strokeWidth="2" />
      <path d="M28 28h18M28 28L19 12M28 28L19 44" stroke="#a6a6a6" strokeWidth="3" /><circle cx="28" cy="28" r="3" fill="#222" />
    </Tile>) },
  { el: (
    <Tile id="la" from="#BDBDC2" to="#AFAFB3">
      {["#4FD94A", "#FBB415", "#F58A20", "#E02A22", "#9FB2BA", "#F93B68", "#9A45D6", "#1C8BFA", "#2BC79A"].map((c, i) => (
        <rect key={c} x={9 + (i % 3) * 14} y={9 + Math.floor(i / 3) * 14} width="10.500" height="10.500" rx="2.600" fill={c} />
      ))}
    </Tile>) },
  { el: (
    <Tile id="ma" from="#1A6FF2" to="#18C4FC">
      <rect x="8" y="15" width="40" height="26" rx="2.500" fill="#F1F1F3" /><path d="M9 17L25 32q3 2.500 6 0L47 17M9 40l12-12M47 40L35 28" stroke="#9a9aa2" strokeWidth="1.400" />
    </Tile>) },
  { el: (
    <Tile id="me" from="#60F57A" to="#14C431">
      <path d="M28 9c12 0 20.500 7.500 20.500 17.500S40 44 28 44c-2 0-4-.3-6-.8-2 2-4.500 3.300-7.500 3.300 1.500-1.500 2.200-3.500 2.200-5.500C11 38 7.500 32.500 7.500 26.500 7.500 16.500 16 9 28 9z" fill="#F0FAF0" />
    </Tile>) },
  { el: (
    <Tile id="mp" from="#5FD468" to="#43C854">
      <path d="M0 20L56 50v6H0z" fill="#f2f2f4" /><path d="M0 26l18 18v12H0z" fill="#EE7FC0" /><path d="M56 56H30V40l8-2z" fill="#FDC90B" /><path d="M30 10l26 34V56L30 32z" fill="#f2f2f4" />
      <circle cx="56" cy="2" r="19" stroke="#dfe3e6" strokeWidth="5" /><path d="M14 0h16v40H14z" fill="#1280F8" stroke="#f2f2f4" strokeWidth="2.500" />
      <circle cx="21.500" cy="34.500" r="12.500" fill="#1280F8" stroke="#f2f2f4" strokeWidth="2.500" /><path d="M21.500 26l6 16-6-4.500-6 4.500z" fill="#fff" />
    </Tile>) },
  { el: (
    <Tile id="ph" from="#FFFFFF" to="#F7F7F7">
      {petals.map((c, i) => <rect key={c} x="21" y="4" width="14" height="23" rx="7" fill={c} fillOpacity=".85" transform={`rotate(${i * 45} 28 28)`} />)}
    </Tile>) },
  { el: (
    <Tile id="sa" from="#FFFFFF" to="#DADADA">
      <circle cx="28" cy="28" r="24.500" fill="#1C8FEF" /><circle cx="28" cy="28" r="21.500" stroke="#BFE3FB" strokeWidth="2.400" strokeDasharray=".8 1.700" />
      <path d="M44.500 13L31 31l-5.500-5.500z" fill="#F2402F" /><path d="M12 43.500L31 31l-5.500-5.500z" fill="#F4F4F4" />
    </Tile>) },
  { el: (
    <svg width="56" height="56" viewBox="0 0 56 56" className="block overflow-visible" fill="none">
      <rect x="50" y="9" width="8" height="40" rx="3" fill="#49C36A" /><rect x="50" y="19" width="8" height="12" fill="#4BA9E8" /><rect x="50" y="30" width="8" height="9" fill="#F0A030" />
      <rect width="56" height="56" rx="12" fill="#A67C45" /><path d="M4 2v52" stroke="#8b6432" strokeWidth="1" />
      <circle cx="29" cy="27" r="17" stroke="#876131" strokeWidth="1.600" /><ellipse cx="29" cy="24" rx="5.500" ry="6.500" fill="#94703c" stroke="#876131" strokeWidth="1" /><path d="M17 39a13 9 0 0 1 24 0 18 18 0 0 1-24 0z" fill="#876131" />
    </svg>) },
  { el: (
    <Tile id="ca" from="#FFFFFF" to="#F1EFEA">
      <rect width="56" height="17.500" fill="#F2554E" />
      <text x="28" y="13.500" fontSize="11" fontWeight="700" textAnchor="middle" fill="#fff" fontFamily="Inter">APR</text>
      <text x="28" y="47" fontSize="35" fontWeight="300" textAnchor="middle" fill="#222" fontFamily="Inter">4</text>
    </Tile>) },
  { el: (
    <Tile id="te" from="#CFDEE6" to="#77777A">
      <rect x="2" y="2" width="52" height="52" rx="11" fill="#000" /><rect x="4.500" y="4.500" width="47" height="47" rx="9" fill="#222225" />
      <path d="M9 10l5 3.500L9 17M16 20h7" stroke="#fff" strokeWidth="1.900" />
    </Tile>) },
  { el: (
    <Tile id="re" from="#FFFFFF" to="#F1EFEB">
      {["#1A82F7", "#F2453D", "#F49A13"].map((c, i) => (
        <g key={c}><circle cx="11" cy={14 + i * 14} r="4.600" stroke={c} /><circle cx="11" cy={14 + i * 14} r="3.200" fill={c} /><path d={`M21 ${14 + i * 14}h29`} stroke="#c9c9c9" strokeWidth="1.300" /></g>
      ))}
    </Tile>) },
  { dot: true, el: (
    <Tile id="no" from="#FFFFFF" to="#EAE7DF">
      <rect width="56" height="15" fill="#FDCB1F" /><path d="M0 15.500h56" stroke="#C9A63A" /><path d="M2 17.500h52" stroke="#ccc" strokeDasharray="1 1.500" /><path d="M0 28.500h56M0 42.500h56" stroke="#d2d0ca" />
    </Tile>) },
  { el: (
    <Tile id="fr" from="#FFFFFF" to="#FFFFFF">
      <circle cx="23" cy="34" r="16" fill="#F98155" /><rect x="19" y="7" width="30" height="31" fill="#17C3F5" fillOpacity=".9" />
      <path d="M19 20a16 16 0 0 1 20 18H19z" fill="#5CA3C9" />
      <path d="M11 35c5-6 6-13 9-13s-2 12 1 12 6-12 9-12-1 12 2 12 6-10 8-10-1 8 2 8 5-4 7-6" stroke="#12376C" strokeWidth="3" strokeLinecap="round" />
    </Tile>) },
  { badge: true, el: (
    <Tile id="tv" from="#22332F" to="#0A0F11">
      <FaApple x="5" y="17" size={20} color="#fff" />
      <text x="24" y="36" fontSize="23" fontWeight="500" fill="#fff" fontFamily="Inter" textLength="24" lengthAdjust="spacingAndGlyphs">tv</text>
    </Tile>) },
  { dot: true, el: (
    <Tile id="mu" from="#FB5C74" to="#FA233B">
      <path d="M22 40V15.500L40 11.500V36" stroke="#fff" strokeWidth="3" /><path d="M21 12.500L41.500 8v7L21 19.500z" fill="#fff" />
      <ellipse cx="17.500" cy="41" rx="5.800" ry="5" fill="#fff" /><ellipse cx="35.600" cy="37" rx="5.800" ry="5" fill="#fff" />
    </Tile>) },
  { el: (
    <Tile id="as" from="#16BFFB" to="#1A6AEE">
      <path d="M25 11l14.500 30M31 11L16 37M12 41l2-4M9 34h24M39 34h8" stroke="#fff" strokeWidth="4.200" strokeLinecap="round" />
    </Tile>) },
  { dot: true, el: <div className="relative h-[58px] w-[58px] rounded-full bg-[#111]"><FaSpotify className="h-[58px] w-[58px] text-[#1ED760]" /></div> },
  { dot: true, el: <Tile id="gh" from="#9537B8" to="#5F2B90"><FaGithub x="3" y="3" size={50} color="#ECEAF2" /></Tile> },
  { el: <Tile id="gi" from="#9537B8" to="#5F2B90"><FaGithub x="3" y="3" size={50} color="#ECEAF2" /></Tile> },
  { el: (
    <svg width="64" height="64" viewBox="0 0 64 64" className="-m-1 block" fill="none">
      <circle cx="32" cy="32" r="31.500" fill="#0B7F84" /><circle cx="32" cy="31" r="30" fill="#12A0A6" />
      <path d="M32 32c-4-6-7-9-11-9a9 9 0 0 0 0 18c4 0 7-3 11-9s7-9 11-9a9 9 0 0 1 0 18c-4 0-7-3-11-9z" stroke="#fff" strokeWidth="3.600" />
      <path d="M17.500 32h7M39.500 32h7M43 28.500v7" stroke="#fff" strokeWidth="2.200" />
    </svg>) },
  { dot: true, el: (
    <svg width="70" height="70" viewBox="0 0 70 70" className="-m-2 block" fill="none">
      <rect width="70" height="70" fill="#2B2C30" /><path d="M2 68V2L20 13M54 28l6 6L2 68" stroke="#050505" strokeWidth="2" />
      <path d="M27 2.500H67.500L64 9.500H60C57 20 52 30 43 33.500H8.500L12 30H15C18 20 19 8 27 2.500z" fill="#86102C" />
      <path d="M44 8C37 11 33 19 32 28.500H38C42 23 46 15 44 8zM47 2L44 9M42 28L39 34" fill="#2B2C30" stroke="#2B2C30" strokeWidth="1.200" />
    </svg>) },
  null,
  { dot: true, el: <svg width="60" height="60" viewBox="0 0 32 32"><WebexArt /></svg> },
  { dot: true, el: (
    <Tile id="zo" from="#1577FF" to="#0B55E8">
      <text x="28" y="32" fontSize="16.500" fontWeight="600" textAnchor="middle" fill="#fff" fontFamily="Inter" textLength="40" lengthAdjust="spacingAndGlyphs">zoom</text>
    </Tile>) },
  { dot: true, el: <Tile id="ch" from="#FFFFFF" to="#E8E8E8"><ChromeArt s={24} /></Tile> },
  { dot: true, el: (
    <svg width="56" height="64" viewBox="0 0 56 64" className="-my-1 block" fill="none">
      <path d="M26 24h4v34h-4z" fill="#B9CBE0" /><ellipse cx="28" cy="58" rx="13" ry="5" fill="#C6D6EA" />
      <path d="M4 2h48l4 22H0z" fill="#2AB1F5" /><path d="M0 24h56v2.500H0z" fill="#1585CC" /><path d="M11 4h34l1 17H10z" fill="#fff" />
      <path d="M14 6.500h20" stroke="#777" strokeWidth="1.500" /><circle cx="21" cy="14.500" r="5.500" fill="#F8C12D" /><path d="M21 14.500V9a5.500 5.500 0 0 1 4 9.500z" fill="#E74C9C" /><path d="M21 14.500L15.500 13a5.500 5.500 0 0 0 2 6z" fill="#3BB4E8" />
      <path d="M31 10h10M31 14h10M31 18h10" stroke="#bbb" strokeWidth="1.200" />
    </svg>) },
  { dot: true, el: (
    <Tile id="ac" from="#CFDEE6" to="#77777A">
      <rect x="2" y="2" width="52" height="52" rx="11" fill="#000" /><rect x="5.500" y="5.500" width="45" height="45" rx="7" fill="#14302E" />
      <path d="M6 14h44M6 23h44M6 32h44M6 41h44M14 6v44M23 6v44M32 6v44M41 6v44" stroke="#2E5852" strokeWidth=".8" />
      <path d="M7 32h5l2 2 2-25 3 39 2-17 3 2 3-1 4-5 4 7 3-3 3 2h8" stroke="#5FD3B4" strokeWidth="1.500" />
    </Tile>) },
  { dot: true, el: (
    <Tile id="ki" from="#3149C0" to="#2E35B5">
      <text x="8" y="44" fontSize="39" fontWeight="700" fill="#fff" fontFamily="Noto Sans" textLength="40" lengthAdjust="spacingAndGlyphs">Kı</text>
      <circle cx="42.500" cy="14" r="4.600" fill="#F56A12" />
    </Tile>) },
  null,
  { el: <Thumb kind={0} /> },
  { el: <Thumb kind={1} /> },
  { el: <Thumb kind={2} /> },
  { el: (
    <svg width="56" height="66" viewBox="0 0 56 66" className="-my-1 block" fill="none">
      <defs><linearGradient id="tr" x1="0" x2="1" y1="0" y2="0"><stop stopColor="#6a6d70" /><stop offset=".4" stopColor="#a5a8ab" /><stop offset="1" stopColor="#606366" /></linearGradient></defs>
      <path d="M4 12L11 60q17 8 34 0L52 12z" fill="url(#tr)" /><ellipse cx="28" cy="12" rx="24" ry="7" fill="#4c4f52" stroke="#9a9da0" />
      <path d="M8 12l4-9 7 4 5-6 7 4 8-3 3 7 6 3-5 4-12 2-16-1z" fill="#DCDCDC" /><path d="M17 5l3 8M30 5l-3 9M38 6l-4 8M24 12l5-7" stroke="#666" strokeWidth="1.500" /><path d="M22 8l5 2-4 3z" fill="#3cae8c" /><path d="M34 11l5-3v5z" fill="#e06a3c" />
    </svg>) },
];

function Dock() {
  return (
    <div className="absolute left-[181px] top-[1698px] flex h-[92px] w-[2519px] rounded-[32px] border-2 border-[#46474b] bg-[#1D1E23] pl-[3px]">
      {dock.map((a, i) =>
        a === null ? (
          <div key={i} className="flex w-[33px] shrink-0 justify-center pt-[10px]"><div className="h-[68px] w-[2px] bg-[#5b5c60]" /></div>
        ) : (
          <div key={i} className="relative flex w-[74px] shrink-0 flex-col items-center">
            <div className="relative mt-[13px] flex h-14 w-[74px] items-center justify-center">
              {a.el}
              {a.badge && <Badge />}
            </div>
            {a.dot && <div className="mt-[9px] h-2 w-2 rounded-full bg-[#9A9B9F]" />}
          </div>
        )
      )}
    </div>
  );
}

const desktopLabels = [
  { t: "S", c: "absolute left-[43px] top-[235px]" },
  { t: "20", c: "absolute left-[19px] top-[458px]" },
  { t: "IN", c: "absolute left-[33px] top-[654px]" },
  { t: "Sign", c: "absolute left-[1px] top-[830px]" },
  { t: "G", c: "absolute left-[28px] top-[1080px]" },
];

function Wallpaper() {
  return (
    <div className="absolute left-0 top-0 h-[1560px] w-[60px] bg-[linear-gradient(180deg,#26469a_0%,#142f80_14%,#143e9c_24%,#0e5aa8_40%,#1648ac_58%,#0c4fa0_76%,#184cb0_92%,#0c3a80_100%)]">
      <svg width="60" height="1560" className="block">
        <filter id="wall" x="0" y="0" width="100%" height="100%">
          <feTurbulence type="fractalNoise" baseFrequency="0.022 0.014" numOctaves="3" seed="7" />
          <feColorMatrix values="0 0 0 0 0.02  0 0 0 0 0.13  0 0 0 0 0.42  2 0 0 0 -0.85" />
        </filter>
        <filter id="wall2" x="0" y="0" width="100%" height="100%">
          <feTurbulence type="fractalNoise" baseFrequency="0.02 0.013" numOctaves="3" seed="23" />
          <feColorMatrix values="0 0 0 0 0.2  0 0 0 0 0.42  0 0 0 0 0.74  1.6 0 0 0 -0.8" />
        </filter>
        <rect width="60" height="1560" filter="url(#wall)" />
        <rect width="60" height="1560" filter="url(#wall2)" />
      </svg>
    </div>
  );
}

export default function App() {
  return (
    <div className="relative h-[1800px] w-[2880px] overflow-hidden bg-[linear-gradient(180deg,#0c1118_0%,#07090e_60%,#0b111b_100%)] font-['Inter',sans-serif]">
      <Wallpaper />
      {desktopLabels.map((d) => (
        <div key={d.t} className={d.c}><span className="text-[24px] font-semibold text-[#DADADA] [text-shadow:0_1px_3px_#000]">{d.t}</span></div>
      ))}
      <div className="absolute -left-px top-[1480px] flex h-[174px] w-[120px] flex-col overflow-hidden rounded-tl-[14px] bg-[#373737] shadow-[0_0_0_1px_#000,inset_0_2px_0_#555]">
        <div className="flex h-20 items-center bg-[#262626] pl-8 shadow-[inset_0_2px_0_#555]"><div className="h-6 w-6 rounded-full bg-[#404040]" /></div>
        <div className="flex flex-1 items-center border-b-2 border-[#4a4a4a] pl-[22px]">
          <svg width="26" height="26" viewBox="0 0 26 26" fill="none" stroke="#6e6e6e" strokeWidth="3"><path d="M13 2L2 13l11 11M2 13h24" /></svg>
        </div>
      </div>
      <KiCadWindow />
      <MenuBar />
      <Dock />
    </div>
  );
}
